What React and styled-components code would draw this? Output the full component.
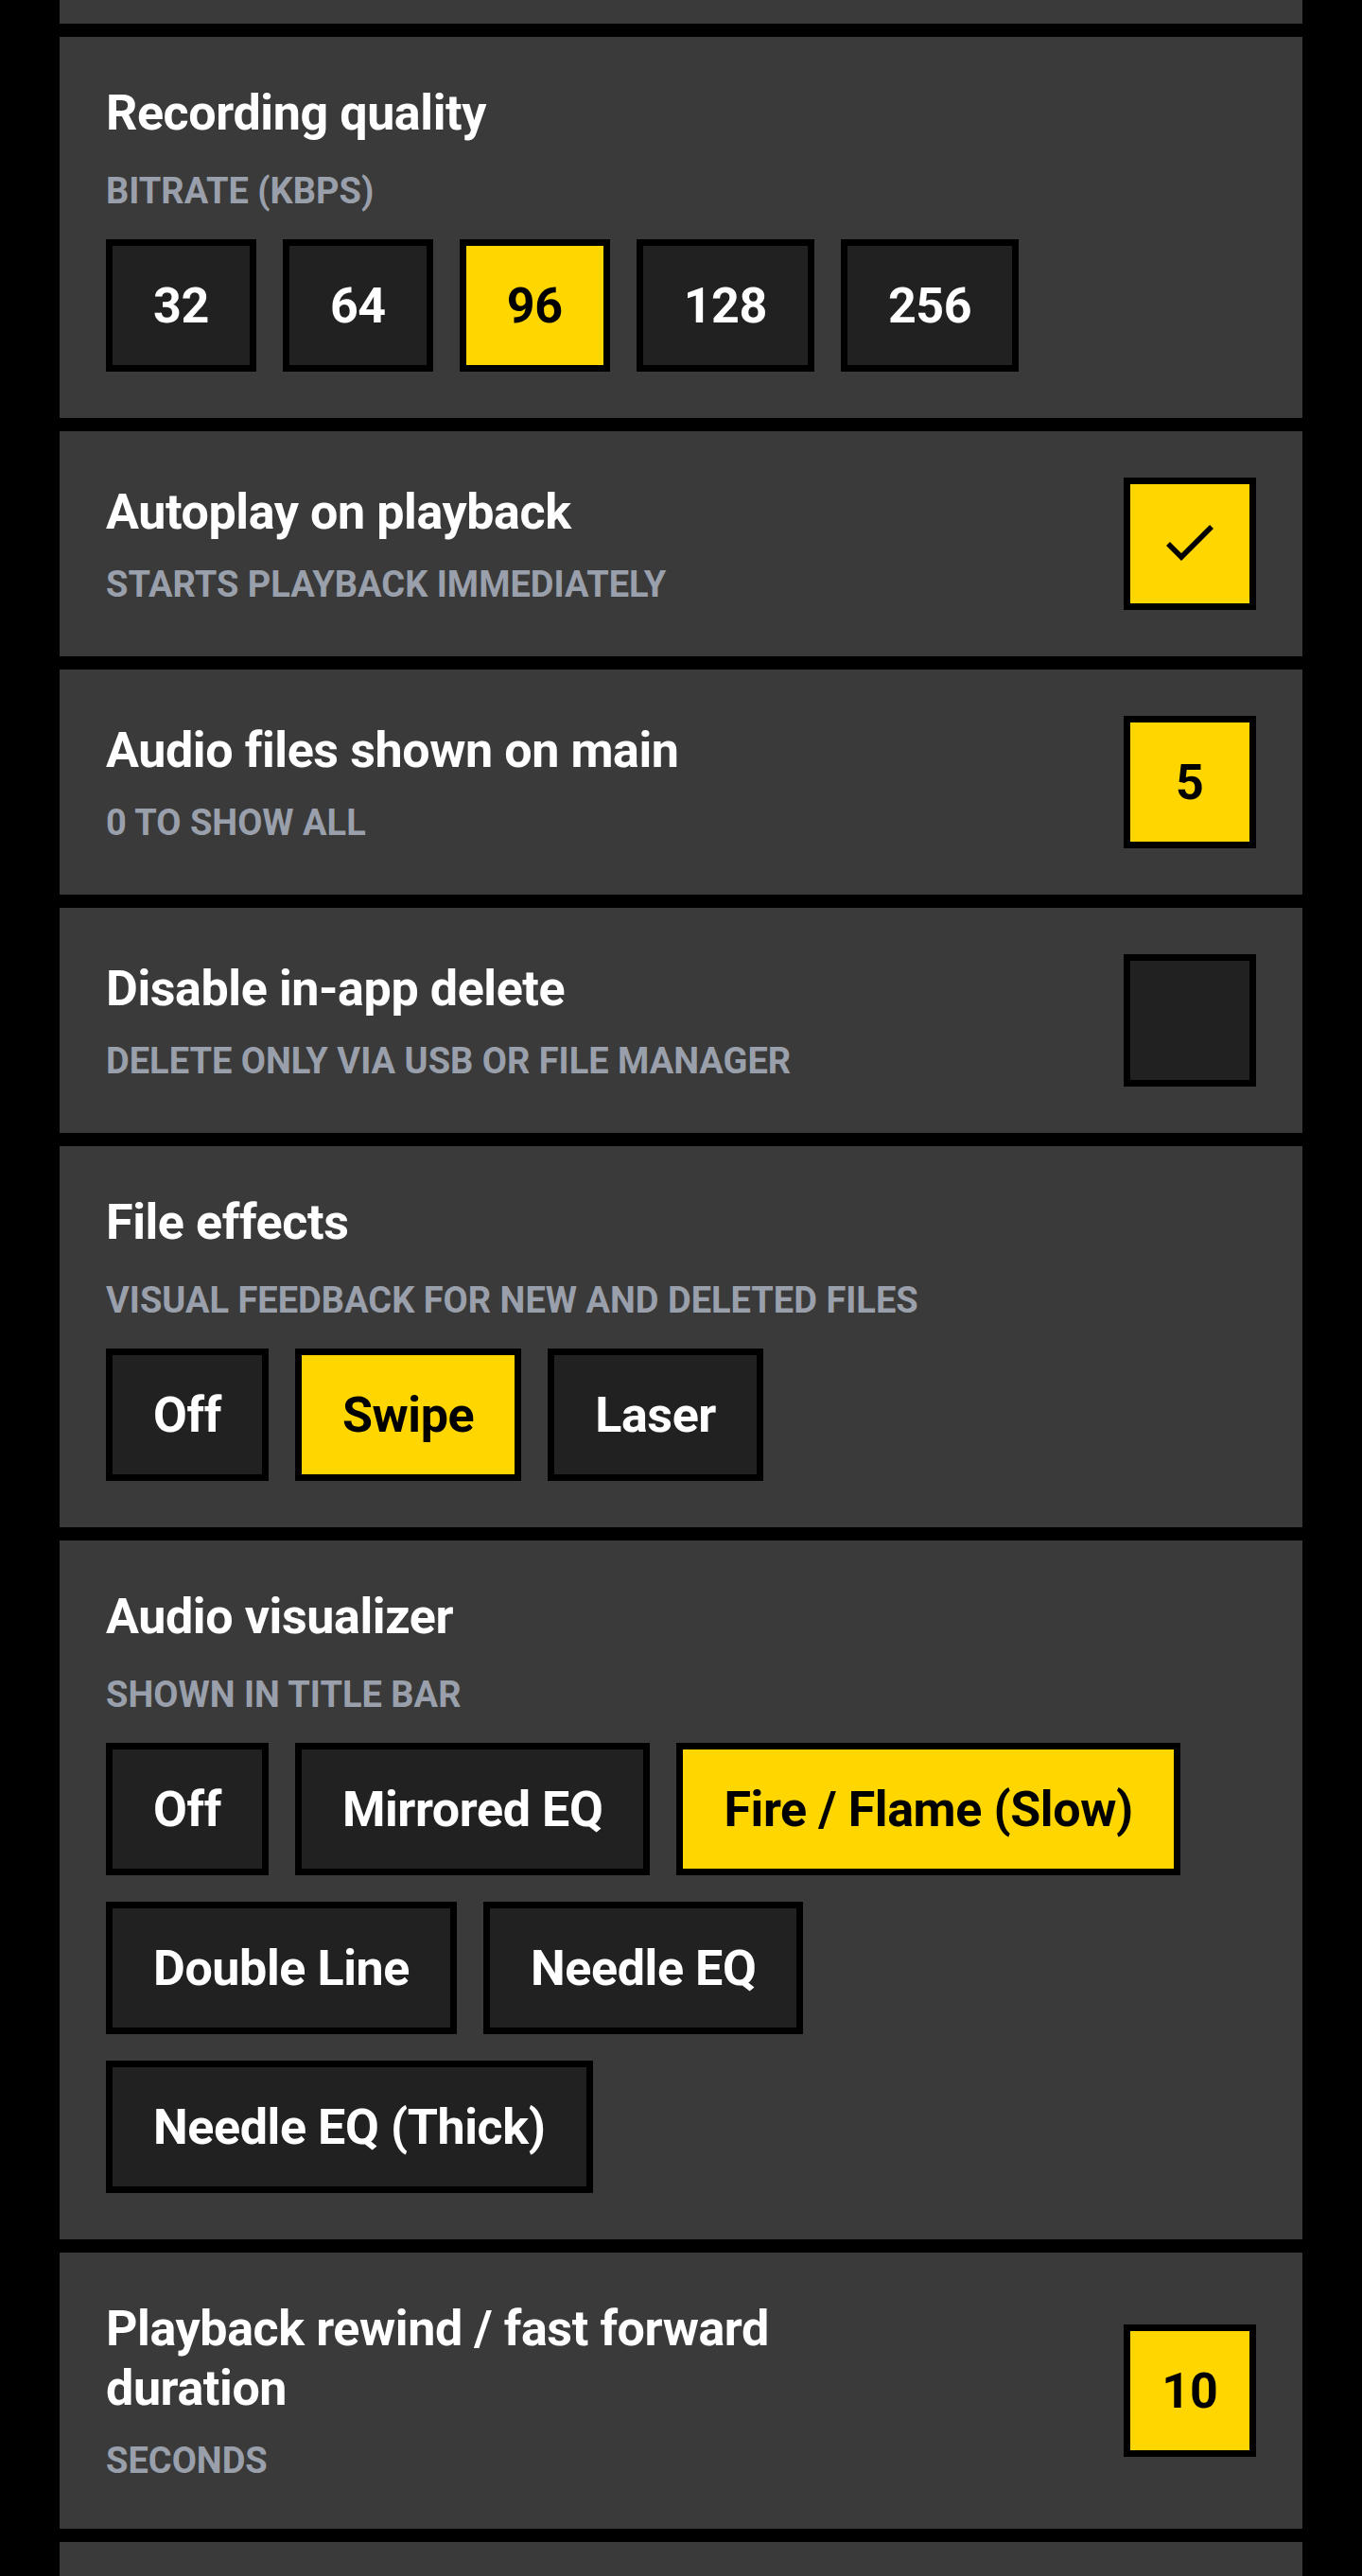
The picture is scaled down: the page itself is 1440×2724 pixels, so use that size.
import React, { useState } from 'react';
import styled, { createGlobalStyle } from 'styled-components';

const GlobalStyle = createGlobalStyle`
  body {
    margin: 0;
    background: #000;
    font-family: Roboto, "Liberation Sans", sans-serif;
    -webkit-font-smoothing: antialiased;
  }
  * {
    box-sizing: border-box;
  }
`;

const BITRATES = [32, 64, 96, 128, 256];
const FILE_EFFECTS = ['Off', 'Swipe', 'Laser'];
const VISUALIZERS = ['Off', 'Mirrored EQ', 'Fire / Flame (Slow)', 'Double Line', 'Needle EQ', 'Needle EQ (Thick)'];

const CheckIcon = () => (
    <svg width="126" height="126" viewBox="0 0 126 126">
        <polyline points="40,63 54,77 86,45" fill="none" stroke="#000" strokeWidth="5.5" />
    </svg>
);

const OptionPicker = ({ options, value, onChange }) => (
    <OptionGroup>
        {options.map((opt) => (
            <OptionButton key={opt} $active={opt === value} onClick={() => onChange(opt)}>
                {opt}
            </OptionButton>
        ))}
    </OptionGroup>
);

const Settings = () => {
    const [bitrate, setBitrate] = useState(96);
    const [autoplay, setAutoplay] = useState(true);
    const [disableDelete, setDisableDelete] = useState(false);
    const [fileEffect, setFileEffect] = useState('Swipe');
    const [visualizer, setVisualizer] = useState('Fire / Flame (Slow)');

    return (
        <Page>
            {/* bottom of the section scrolled above */}
            <Card $height={25} />

            <Card>
                <Title>Recording quality</Title>
                <Subtitle>Bitrate (kbps)</Subtitle>
                <OptionPicker options={BITRATES} value={bitrate} onChange={setBitrate} />
            </Card>

            <Card $row>
                <TextBlock>
                    <Title>Autoplay on playback</Title>
                    <Subtitle $row>Starts playback immediately</Subtitle>
                </TextBlock>
                <ControlBox $active={autoplay} onClick={() => setAutoplay(!autoplay)}>
                    {autoplay && <CheckIcon />}
                </ControlBox>
            </Card>

            <Card $row>
                <TextBlock>
                    <Title>Audio files shown on main</Title>
                    <Subtitle $row>0 to show all</Subtitle>
                </TextBlock>
                <ControlBox $active>5</ControlBox>
            </Card>

            <Card $row>
                <TextBlock>
                    <Title>Disable in-app delete</Title>
                    <Subtitle $row>Delete only via USB or file manager</Subtitle>
                </TextBlock>
                <ControlBox $active={disableDelete} onClick={() => setDisableDelete(!disableDelete)}>
                    {disableDelete && <CheckIcon />}
                </ControlBox>
            </Card>

            <Card>
                <Title>File effects</Title>
                <Subtitle>Visual feedback for new and deleted files</Subtitle>
                <OptionPicker options={FILE_EFFECTS} value={fileEffect} onChange={setFileEffect} />
            </Card>

            <Card>
                <Title>Audio visualizer</Title>
                <Subtitle>Shown in title bar</Subtitle>
                <OptionPicker options={VISUALIZERS} value={visualizer} onChange={setVisualizer} />
            </Card>

            <Card $row>
                <TextBlock>
                    <Title>Playback rewind / fast forward duration</Title>
                    <Subtitle $row>Seconds</Subtitle>
                </TextBlock>
                <ControlBox $active>10</ControlBox>
            </Card>

            <Card $height={238} />
        </Page>
    );
};

const App = () => (
    <>
        <GlobalStyle />
        <Settings />
    </>
);

export default App;

const Page = styled.main`
    display: flex;
    flex-direction: column;
    gap: 14px;
    padding: 0 63px;
    height: 2724px;
    overflow: hidden;
`;

const Card = styled.section`
    flex-shrink: 0;
    display: flex;
    flex-direction: ${(p) => (p.$row ? 'row' : 'column')};
    align-items: ${(p) => (p.$row ? 'center' : 'stretch')};
    justify-content: ${(p) => (p.$row ? 'space-between' : 'flex-start')};
    column-gap: 40px;
    background: #3a3a3a;
    padding: ${(p) => (p.$height ? '0' : '49px')};
    height: ${(p) => (p.$height ? `${p.$height}px` : 'auto')};
`;

const TextBlock = styled.div`
    display: flex;
    flex-direction: column;
    max-width: 780px;
`;

const Title = styled.h2`
    margin: 0;
    font-size: 52px;
    line-height: 63px;
    font-weight: 700;
    letter-spacing: -0.4px;
    color: #fff;
`;

const Subtitle = styled.div`
    margin-top: ${(p) => (p.$row ? '22px' : '28px')};
    font-size: 38px;
    line-height: 46px;
    font-weight: 700;
    text-transform: uppercase;
    color: #9aa0ab;
`;

const OptionGroup = styled.div`
    display: flex;
    flex-wrap: wrap;
    gap: 28px;
    margin-top: 28px;
`;

const OptionButton = styled.button`
    height: 140px;
    padding: 0 43px;
    border: 7px solid #000;
    border-radius: 0;
    background: ${(p) => (p.$active ? '#ffd600' : '#212121')};
    color: ${(p) => (p.$active ? '#000' : '#fff')};
    font-family: inherit;
    font-size: 52px;
    line-height: 63px;
    font-weight: 700;
    letter-spacing: -0.4px;
    cursor: pointer;
`;

const ControlBox = styled.div`
    flex-shrink: 0;
    width: 140px;
    height: 140px;
    display: flex;
    align-items: center;
    justify-content: center;
    border: 7px solid #000;
    background: ${(p) => (p.$active ? '#ffd600' : '#212121')};
    color: #000;
    font-size: 52px;
    font-weight: 700;
    cursor: pointer;
`;
